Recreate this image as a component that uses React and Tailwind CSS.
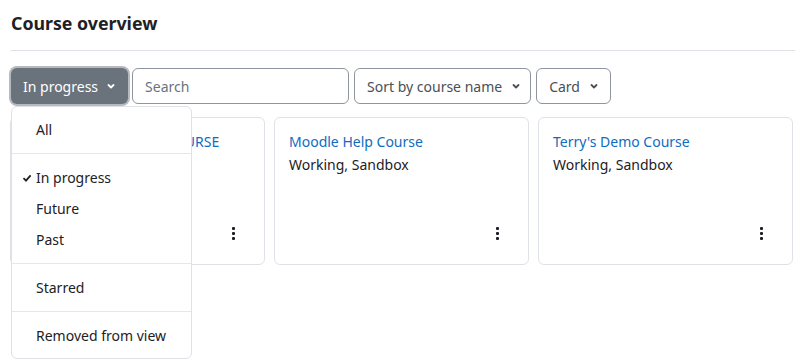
import { useState } from 'react';

const courses = [
  { id: 1, name: 'MOODLES SANDBOX COURSE', category: '' },
  { id: 2, name: 'Moodle Help Course', category: 'Working, Sandbox' },
  { id: 3, name: "Terry's Demo Course", category: 'Working, Sandbox' },
];

function Chevron({ className }) {
  return (
    <svg viewBox="0 0 10 10" className={className} fill="none" stroke="currentColor" strokeWidth="1.8">
      <path d="M2.5 4 L5 6.5 L7.5 4" strokeLinecap="round" strokeLinejoin="round" />
    </svg>
  );
}

function Kebab() {
  return (
    <span className="flex flex-col items-center gap-[2px]">
      <span className="w-[3px] h-[3px] bg-[#1d2125] rounded-[1px]" />
      <span className="w-[3px] h-[3px] bg-[#1d2125] rounded-[1px]" />
      <span className="w-[3px] h-[3px] bg-[#1d2125] rounded-[1px]" />
    </span>
  );
}

function CourseCard({ course }) {
  return (
    <div className="w-[255px] h-[148px] border border-[#dee2e6] rounded-[6px] bg-white flex flex-col px-[14px] pt-[12px] pb-[24px]">
      <a className="text-[#0f6cbf] leading-[23px] truncate">{course.name}</a>
      <div className="text-[#1d2125] leading-[23px]">{course.category}</div>
      <div className="mt-auto flex justify-end pr-[15px]">
        <Kebab />
      </div>
    </div>
  );
}

export default function App() {
  const [open] = useState(true);
  const items = [
    [{ label: 'All' }],
    [{ label: 'In progress', active: true }, { label: 'Future' }, { label: 'Past' }],
    [{ label: 'Starred' }],
    [{ label: 'Removed from view' }],
  ];

  return (
    <div className="w-[812px] h-[361px] bg-white overflow-hidden text-[14px] text-[#1d2125]" style={{ fontFamily: '"Noto Sans", sans-serif' }}>
      <div className="pl-[11px] pr-[17px]">
        <h3 className="text-[17.75px] font-bold pt-[10px] leading-[26px]">Course overview</h3>
        <div className="h-px bg-[#dee2e6] mt-[14px]" />

        <div className="relative mt-[17px] flex items-center gap-[4px]">
          <button className="h-[36px] pl-[12px] pr-[12px] rounded-[6px] bg-[#6a737b] text-white flex items-center gap-[8px] shadow-[0_0_0_2px_#b5babf]">
            In progress
            <Chevron className="w-[10px] h-[10px]" />
          </button>
          <div className="h-[36px] w-[217px] border border-[#8f959e] rounded-[6px] flex items-center px-[12px] text-[#6a737b]">
            Search
          </div>
          <button className="h-[36px] ml-[1px] pl-[12px] pr-[9px] border border-[#8f959e] rounded-[6px] flex items-center gap-[9px] text-[#495057]">
            Sort by course name
            <Chevron className="w-[10px] h-[10px]" />
          </button>
          <button className="h-[36px] ml-[1px] pl-[12px] pr-[11px] border border-[#8f959e] rounded-[6px] flex items-center gap-[9px] text-[#495057]">
            Card
            <Chevron className="w-[10px] h-[10px]" />
          </button>

          {open && (
            <div className="absolute left-0 top-[38px] w-[181px] bg-white border border-[#dee2e6] rounded-[6px] py-[7px] z-10">
              {items.map((group, gi) => (
                <div key={gi}>
                  {gi > 0 && <div className="h-px bg-[#e5e7ea] my-[8px]" />}
                  {group.map((it) => (
                    <div key={it.label} className="relative h-[31px] flex items-center pl-[24px] text-[#1d2125]">
                      {it.active && (
                        <svg viewBox="0 0 10 10" className="absolute left-[10px] w-[10px] h-[10px]" fill="none" stroke="#1d2125" strokeWidth="1.8">
                          <path d="M1.5 5.2 L4 7.6 L8.6 2.4" />
                        </svg>
                      )}
                      {it.label}
                    </div>
                  ))}
                </div>
              ))}
            </div>
          )}
        </div>

        <div className="mt-[13px] -ml-px flex gap-[9px]">
          {courses.map((c) => (
            <CourseCard key={c.id} course={c} />
          ))}
        </div>
      </div>
    </div>
  );
}
